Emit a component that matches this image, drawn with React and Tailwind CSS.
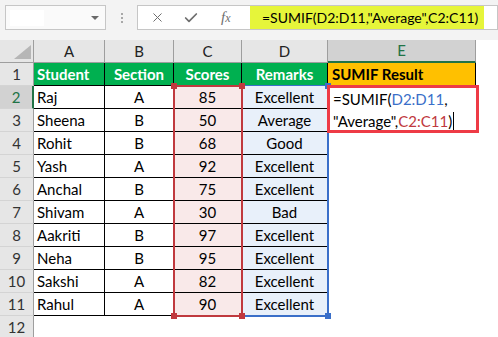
import React from 'react';
import { X, Check } from 'lucide-react';

const rows = [
  ['Raj', 'A', 85, 'Excellent'],
  ['Sheena', 'B', 50, 'Average'],
  ['Rohit', 'B', 68, 'Good'],
  ['Yash', 'A', 92, 'Excellent'],
  ['Anchal', 'B', 75, 'Excellent'],
  ['Shivam', 'A', 30, 'Bad'],
  ['Aakriti', 'B', 97, 'Excellent'],
  ['Neha', 'B', 95, 'Excellent'],
  ['Sakshi', 'A', 82, 'Excellent'],
  ['Rahul', 'A', 90, 'Excellent'],
];

function RowHead({ n, active }) {
  return (
    <div className={`w-[34px] h-[23px] shrink-0 flex items-center justify-center border-b border-[#d4d4d4] ${active ? 'bg-[#d2d2d2] text-[#217346] border-r-2 border-r-[#217346]' : 'bg-[#e6e6e6] text-[#333] border-r border-r-[#9e9e9e]'}`}>
      {n}
    </div>
  );
}

function Handle({ className }) {
  return <div className={`absolute w-[6px] h-[6px] ${className}`} />;
}

export default function App() {
  return (
    <div className="w-[498px] h-[337px] overflow-hidden bg-white text-[15px] text-black font-['Lato',sans-serif]">
      {/* toolbar */}
      <div className="h-[40px] bg-[#f3f3f3] flex items-start pt-[5px] pl-[5px]">
        <div className="w-[101px] h-[25px] bg-[#fafafa] border border-[#c6c6c6] flex items-center pl-[4px] pr-[6px] justify-between">
          <div className="w-[34px] h-[16px] bg-white" />
          <div className="w-0 h-0 border-l-[4px] border-r-[4px] border-t-[4px] border-l-transparent border-r-transparent border-t-[#6a6a6a]" />
        </div>
        <div className="w-[31px] h-[25px] flex flex-col items-center justify-center gap-[2px]">
          <div className="w-[2px] h-[2px] bg-[#a8a8a8]" />
          <div className="w-[2px] h-[2px] bg-[#a8a8a8]" />
          <div className="w-[2px] h-[2px] bg-[#a8a8a8]" />
        </div>
        <div className="flex-1 h-[25px] bg-white border border-[#c6c6c6] flex items-stretch">
          <div className="w-[112px] shrink-0 flex items-center text-[#6e6e6e]">
            <X className="ml-[12px] w-[15px] h-[15px]" strokeWidth={1.6} />
            <Check className="ml-[18px] w-[16px] h-[16px]" strokeWidth={2.6} />
            <span className="ml-[22px] font-['Liberation_Serif',serif] italic text-[15px]">f<span className="text-[12px]">x</span></span>
          </div>
          <div className="w-[234px] bg-[#e6f53a] flex items-center pl-[12px] text-[14px] whitespace-nowrap">
            =SUMIF(D2:D11,"Average",C2:C11)
          </div>
        </div>
      </div>

      {/* sheet */}
      <div className="relative">
        <div className="flex h-[23px]">
          <div className="w-[34px] shrink-0 bg-[#e6e6e6] border-r border-b border-[#9e9e9e] relative">
            <svg className="absolute right-[2px] bottom-[3px]" width="17" height="14" viewBox="0 0 17 14">
              <polygon points="17,0 17,14 0,14" fill="#b6b6b6" />
            </svg>
          </div>
          {['A', 'B', 'C', 'D'].map((c, i) => (
            <div key={c} className={`${['w-[71px]', 'w-[69px]', 'w-[68px]', 'w-[86px]'][i]} shrink-0 bg-[#e6e6e6] border-r border-b border-[#9e9e9e] flex items-center justify-center text-[#222]`}>
              {c}
            </div>
          ))}
          <div className="w-[148px] shrink-0 bg-[#d2d2d2] border-r border-[#9e9e9e] border-b-2 border-b-[#217346] flex items-center justify-center text-[#217346]">
            E
          </div>
        </div>

        {/* header row */}
        <div className="flex">
          <RowHead n={1} />
          <div className="w-[71px] h-[23px] bg-[#00b050] border-r border-b border-black font-bold text-white flex items-center pl-[3px]">Student</div>
          <div className="w-[69px] h-[23px] bg-[#00b050] border-r border-b border-black font-bold text-white flex items-center justify-center">Section</div>
          <div className="w-[68px] h-[23px] bg-[#00b050] border-r border-b border-black font-bold text-white flex items-center justify-center">Scores</div>
          <div className="w-[86px] h-[23px] bg-[#00b050] border-r border-b border-black font-bold text-white flex items-center justify-center">Remarks</div>
          <div className="w-[148px] h-[23px] bg-[#ffc000] border-r border-b border-black font-bold flex items-center pl-[4px]">SUMIF Result</div>
        </div>

        {rows.map(([name, sec, score, remark], i) => (
          <div key={name} className="flex">
            <RowHead n={i + 2} active={i === 0} />
            <div className="w-[71px] h-[23px] border-r border-b border-black flex items-center pl-[3px]">{name}</div>
            <div className="w-[69px] h-[23px] border-r border-b border-black flex items-center justify-center">{sec}</div>
            <div className="w-[68px] h-[23px] bg-[#f9e9e9] border-r border-b border-black flex items-center justify-center">{score}</div>
            <div className="w-[86px] h-[23px] bg-[#e8f0fa] border-r border-b border-black flex items-center justify-center">{remark}</div>
          </div>
        ))}
        <div className="flex">
          <RowHead n={12} />
        </div>

        {/* D2:D11 reference range */}
        <div className="absolute left-[242px] top-[45px] w-[87px] h-[232px] border-t border-r-2 border-b-2 border-[#3a6fc9]">
          <Handle className="bg-[#3a6fc9] -right-[4px] -top-[3px]" />
          <Handle className="bg-[#3a6fc9] -right-[4px] -bottom-[4px]" />
        </div>

        {/* C2:C11 reference range */}
        <div className="absolute left-[173px] top-[45px] w-[70px] h-[232px] border-2 border-[#c0393e]">
          <Handle className="bg-[#c0393e] -left-[4px] -top-[4px]" />
          <Handle className="bg-[#c0393e] -right-[4px] -top-[4px]" />
          <Handle className="bg-[#c0393e] -left-[4px] -bottom-[4px]" />
          <Handle className="bg-[#c0393e] -right-[4px] -bottom-[4px]" />
        </div>

        {/* E2 in edit mode */}
        <div className="absolute left-[327px] top-[45px] w-[152px] h-[48px] bg-white border-[3px] border-[#ee3b46] pl-[3px] leading-[22px] whitespace-nowrap">
          <div>=SUMIF(<span className="text-[#3a6fc9]">D2:D11</span>,</div>
          <div className="flex items-center">
            "Average",<span className="text-[#c0393e]">C2:C11</span>)
            <span className="inline-block w-[1px] h-[18px] bg-black ml-[1px]" />
          </div>
        </div>
      </div>
    </div>
  );
}
